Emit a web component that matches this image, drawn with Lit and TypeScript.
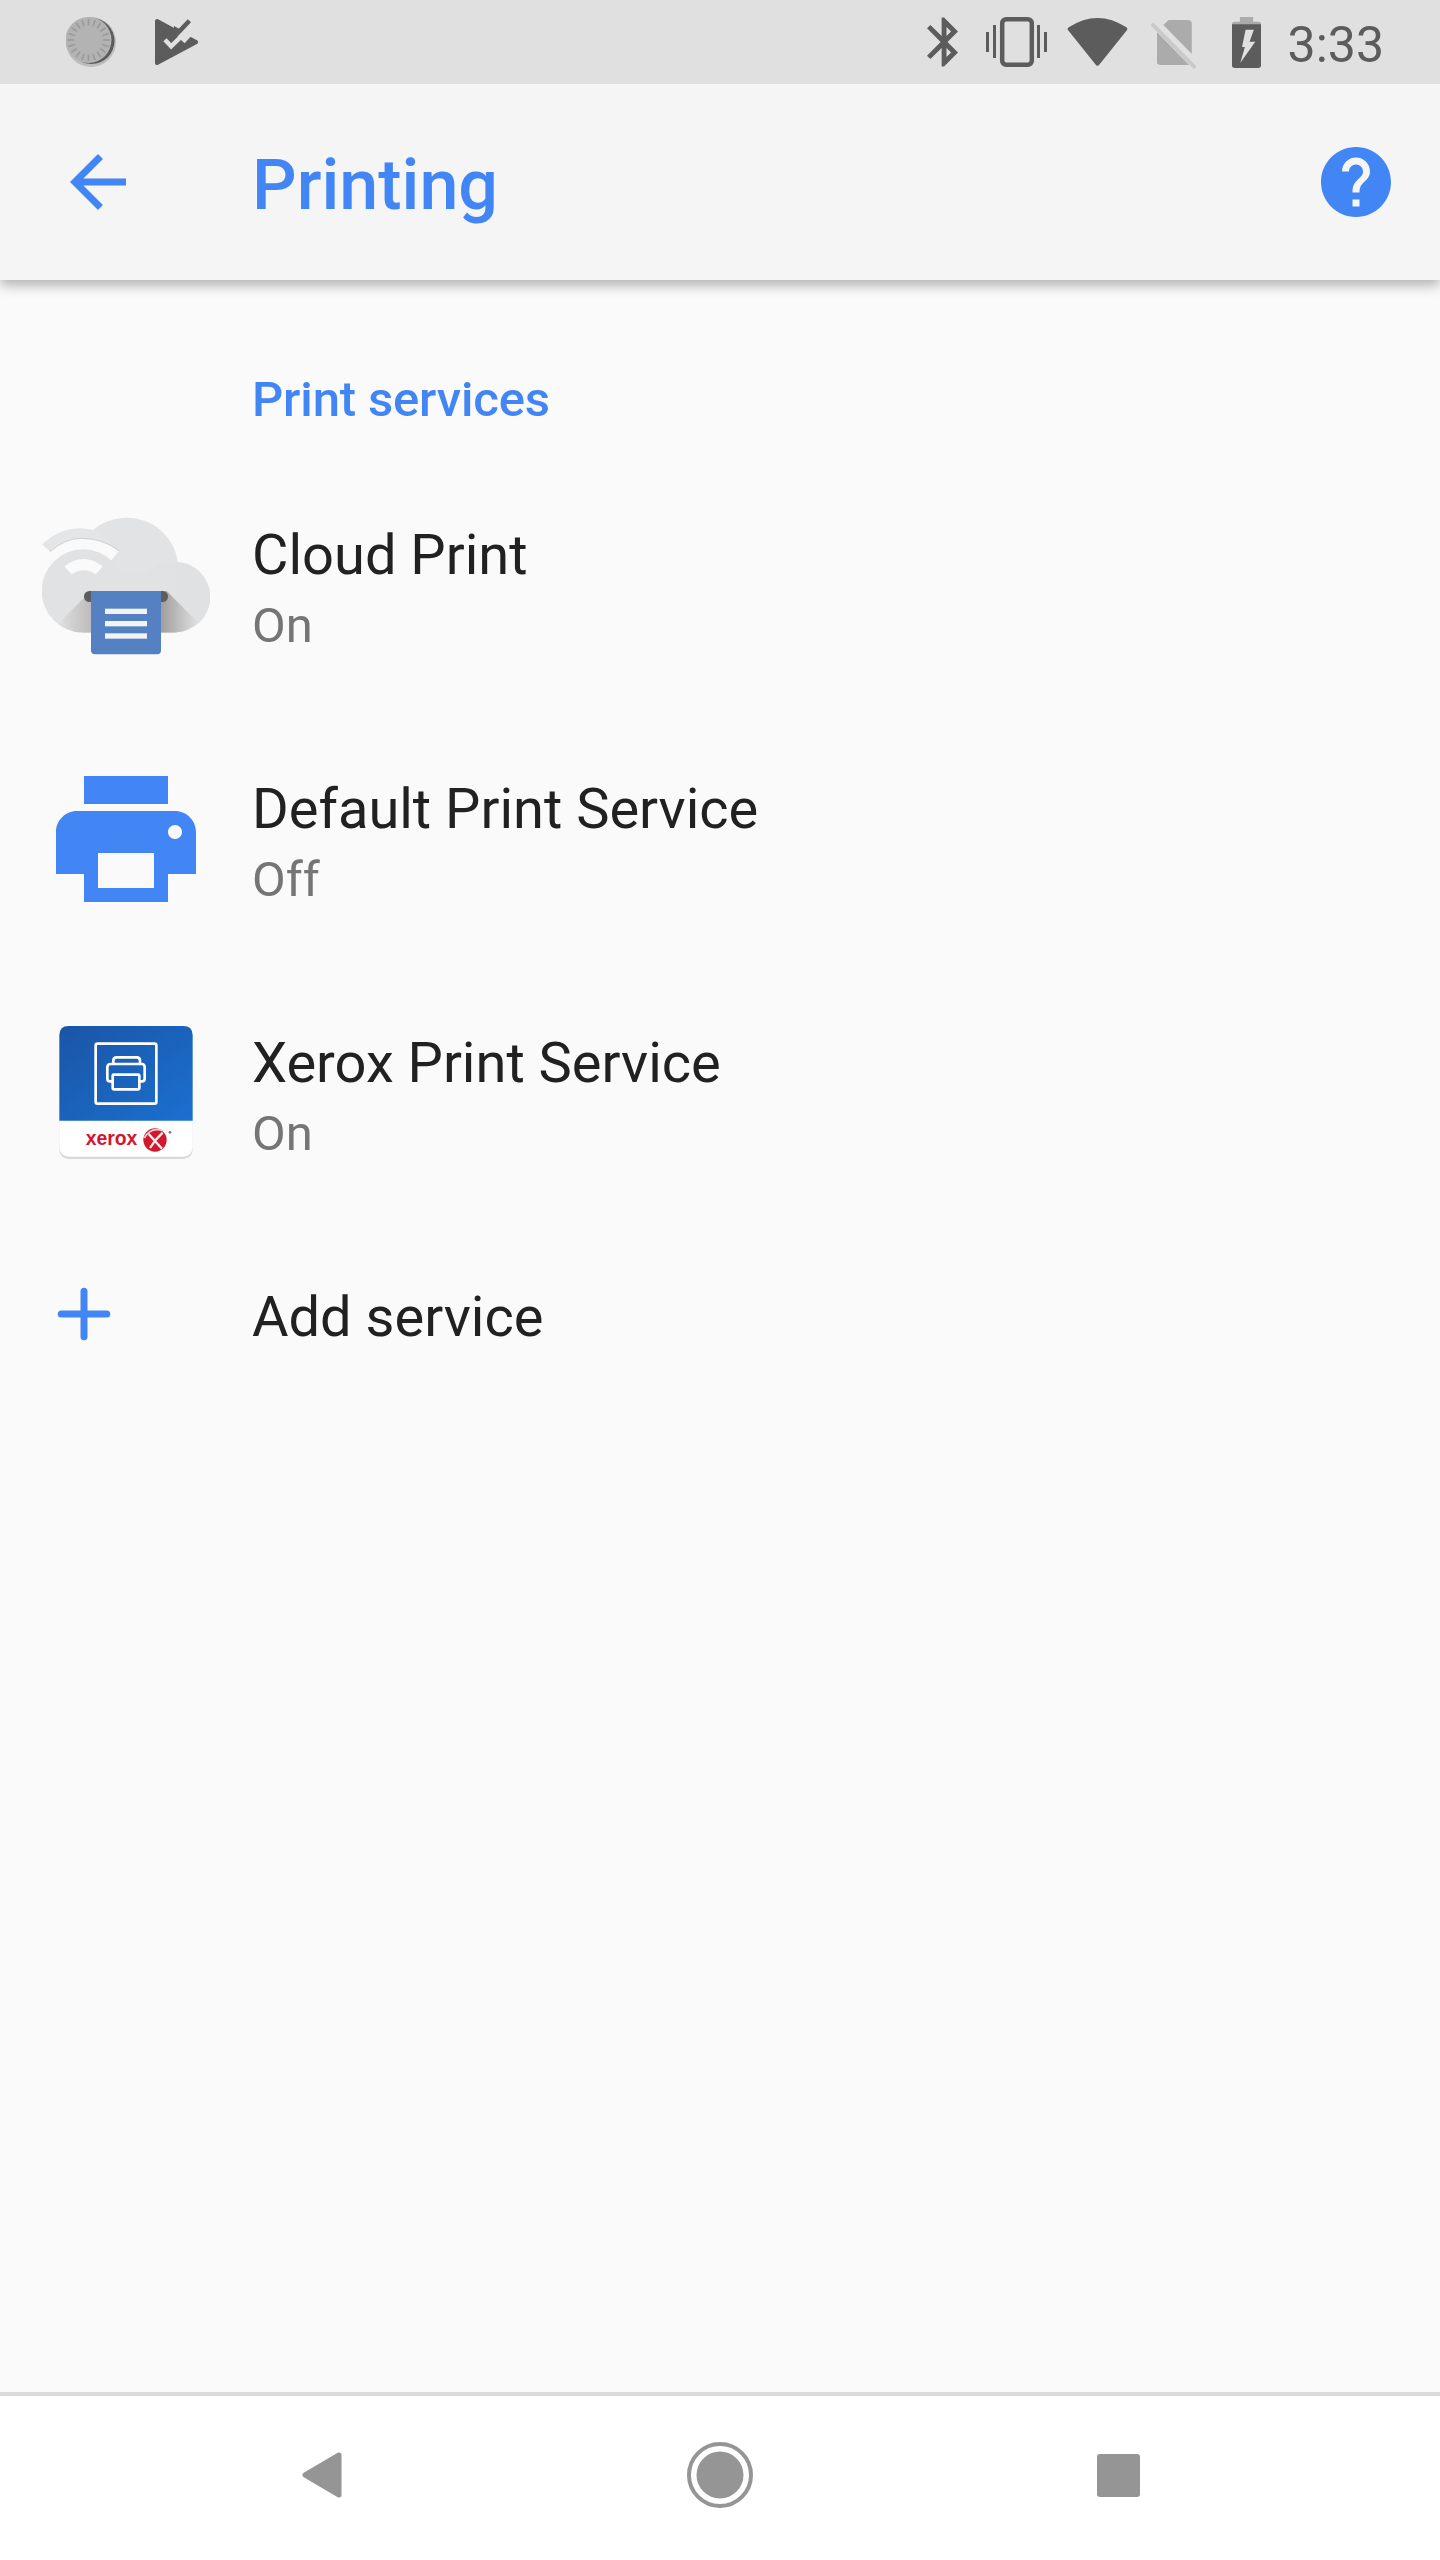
import { LitElement, html, svg, css } from 'lit';
import { customElement } from 'lit/decorators.js';

const ticks = Array.from({ length: 20 }, (_, i) => i * 18);

@customElement('app-root')
export class AppRoot extends LitElement {
  static styles = css`
    :host {
      display: block;
      width: 1440px;
      height: 2560px;
      font-family: Roboto, 'Liberation Sans', sans-serif;
      background: #fafafa;
    }

    .page {
      display: flex;
      flex-direction: column;
      height: 2560px;
    }

    .status {
      display: flex;
      align-items: center;
      height: 84px;
      flex: none;
      background: #e0e0e0;
      padding: 0 56px 0 66px;
      box-sizing: border-box;
      position: relative;
      z-index: 2;
      color: #5c5c5c;
    }

    .status svg {
      display: block;
      flex: none;
    }

    .check { margin-left: 39px; }
    .bt { margin-left: auto; }
    .vib { margin-left: 28px; }
    .wifi { margin-left: 20px; }
    .sim { margin-left: 23px; margin-top: 3px; }
    .batt { margin-left: 36px; }

    .time {
      margin-left: 27px;
      padding-top: 6px;
      font-size: 50px;
      line-height: 78px;
    }

    .toolbar {
      display: flex;
      align-items: center;
      height: 196px;
      flex: none;
      background: #f5f5f5;
      padding: 0 42px 0 56px;
      box-sizing: border-box;
      box-shadow: 0 5px 12px rgba(0, 0, 0, 0.3);
      position: relative;
      z-index: 1;
    }

    .toolbar svg {
      display: block;
      flex: none;
    }

    .title {
      margin-left: 112px;
      padding-top: 5px;
      font-size: 70px;
      font-weight: 500;
      color: #4285f4;
      flex: 1;
    }

    main {
      flex: 1;
    }

    .category {
      height: 178px;
      box-sizing: border-box;
      padding: 78px 0 0 252px;
      font-size: 49px;
      line-height: 84px;
      font-weight: 500;
      letter-spacing: -0.15px;
      color: #4285f4;
    }

    .row {
      display: flex;
      align-items: center;
      height: 254px;
    }

    .row.single {
      height: 188px;
    }

    .lead {
      width: 252px;
      flex: none;
      padding-left: 42px;
      box-sizing: border-box;
    }

    .lead svg {
      display: block;
    }

    .text {
      padding-top: 8px;
    }

    .name {
      font-size: 56px;
      line-height: 72px;
      color: #212121;
    }

    .single .name {
      padding-top: 5px;
    }

    .sum {
      font-size: 49px;
      line-height: 69px;
      color: #757575;
    }

    .nav {
      display: flex;
      justify-content: center;
      align-items: center;
      height: 168px;
      flex: none;
      box-sizing: border-box;
      border-top: 4px solid #dadada;
      background: #fff;
      padding-bottom: 6px;
    }

    .nav div {
      width: 398px;
      display: flex;
      justify-content: center;
    }

    .nav svg {
      display: block;
    }
  `;

  private spinner() {
    return html`<svg width="50" height="50" viewBox="0 0 50 50">
      <circle cx="25" cy="25" r="25" fill="#bdbdbd"></circle>
      <circle cx="25.5" cy="24" r="23" fill="#5c5c5c"></circle>
      <circle cx="22.5" cy="23" r="23" fill="#b3b3b3"></circle>
      ${ticks.map(
        (a) => svg`<rect x="21.7" y="2" width="1.7" height="6.5" fill="#9a9a9a" transform="rotate(${a} 22.5 23)"></rect>`
      )}
    </svg>`;
  }

  private cloudIcon() {
    return html`<svg width="168" height="168" viewBox="66 30 504 504">
      <defs>
        <linearGradient id="sl" x1="0" x2="1" y1="0" y2="0">
          <stop offset="0" stop-color="#bdbbba" stop-opacity="0"></stop>
          <stop offset="1" stop-color="#bdbbba"></stop>
        </linearGradient>
        <linearGradient id="sr" x1="0" x2="1" y1="0" y2="0">
          <stop offset="0" stop-color="#a09e9d"></stop>
          <stop offset="1" stop-color="#a09e9d" stop-opacity="0"></stop>
        </linearGradient>
        <clipPath id="cl">
          <circle cx="190" cy="300" r="125"></circle>
          <circle cx="465" cy="318" r="106"></circle>
          <rect x="190" y="250" width="280" height="175"></rect>
        </clipPath>
      </defs>
      <circle cx="320" cy="235" r="155" fill="#e2e3e4"></circle>
      <circle cx="465" cy="318" r="106" fill="#e0e1e2"></circle>
      <rect x="190" y="250" width="280" height="175" fill="#e1e2e3"></rect>
      <path d="M66 160Q120 112 180 112Q205 112 232 120L297 180Q250 142 185 142Q135 142 90 182Z" fill="#e4e5e6"></path>
      <path d="M90 182Q135 142 185 142Q250 142 297 180L272 210L190 230Z" fill="#fafafa"></path>
      <path d="M90 182Q135 142 185 142Q250 142 297 180" fill="none" stroke="#cfcfcf" stroke-width="3"></path>
      <circle cx="190" cy="300" r="125" fill="#e1e2e3"></circle>
      <path d="M133 226Q190 182 248 226L228 250Q190 226 155 250Z" fill="#fafafa"></path>
      <g clip-path="url(#cl)">
        <path d="M213 300L112 400L150 430H213Z" fill="url(#sl)"></path>
        <path d="M423 300H440L535 395L480 430H423Z" fill="url(#sr)"></path>
      </g>
      <rect x="192" y="300" width="252" height="33" rx="16" fill="#5d5d5d"></rect>
      <path d="M213 300H423V478Q423 490 411 490H225Q213 490 213 478Z" fill="#5580c2"></path>
      <rect x="255" y="353" width="126" height="16" fill="#f1f3f4"></rect>
      <rect x="255" y="390" width="126" height="16" fill="#f1f3f4"></rect>
      <rect x="255" y="427" width="126" height="16" fill="#f1f3f4"></rect>
    </svg>`;
  }

  private printerIcon() {
    return html`<svg width="168" height="168" viewBox="0 0 24 24">
      <path
        fill="#4285f4"
        d="M19 8H5c-1.66 0-3 1.34-3 3v6h4v4h12v-4h4v-6c0-1.66-1.34-3-3-3zm-3 11H8v-5h8v5zm3-7c-.55 0-1-.45-1-1s.45-1 1-1 1 .45 1 1-.45 1-1 1zm-1-9H6v4h12V3z"
      ></path>
    </svg>`;
  }

  private xeroxIcon() {
    return html`<svg width="168" height="168" viewBox="36 -3 504 504">
      <defs>
        <linearGradient id="xb" x1="0" x2="1" y1="0" y2="1">
          <stop offset="0" stop-color="#1a55a6"></stop>
          <stop offset="1" stop-color="#1a70d0"></stop>
        </linearGradient>
      </defs>
      <rect x="88" y="52" width="400" height="395" rx="28" fill="#d9d9d9"></rect>
      <rect x="88" y="48" width="400" height="392" rx="28" fill="#fff"></rect>
      <path d="M88 332V76Q88 48 116 48H460Q488 48 488 76V332Z" fill="url(#xb)"></path>
      <g fill="none" stroke="#fff" stroke-width="8" stroke-linejoin="round">
        <rect x="197" y="101" width="182" height="180" rx="5"></rect>
        <path d="M250 162V152Q250 142 260 142H320Q330 142 330 152V162"></path>
        <path d="M246 214H240Q232 214 232 206V172Q232 162 242 162H336Q344 162 344 172V206Q344 214 336 214H330"></path>
        <rect x="248" y="194" width="80" height="44" rx="3"></rect>
      </g>
      <text x="167" y="405" font-family="Liberation Sans, sans-serif" font-size="62" font-weight="700" fill="#d6142b" textLength="155" lengthAdjust="spacingAndGlyphs">xerox</text>
      <circle cx="375" cy="390" r="35" fill="#d3182e"></circle>
      <path d="M343 384Q362 350 398 362" fill="none" stroke="#e9c9cc" stroke-width="5"></path>
      <path d="M356 372L396 416M398 368Q376 388 360 414" fill="none" stroke="#f2f2f2" stroke-width="7"></path>
      <circle cx="420" cy="367" r="4" fill="#777"></circle>
    </svg>`;
  }

  render() {
    return html`
      <div class="page">
        <div class="status">
          ${this.spinner()}
          <svg class="check" width="43" height="46" viewBox="45 30 125 133" preserveAspectRatio="none">
            <path d="M51 36L164 97L51 157Z" fill="#5c5c5c" stroke="#5c5c5c" stroke-width="12" stroke-linejoin="round"></path>
            <path d="M120 90L170 36" fill="none" stroke="#e0e0e0" stroke-width="30"></path>
            <path d="M100 80L115 58L100 50Z" fill="#5c5c5c"></path>
            <path d="M104 78L145 35" fill="none" stroke="#5c5c5c" stroke-width="13"></path>
            <path d="M74 90L92 109L134 68" fill="none" stroke="#e0e0e0" stroke-width="13"></path>
          </svg>
          <svg class="bt" width="31" height="50" viewBox="5 2 12.71 20">
            <path
              fill="#5c5c5c"
              d="M17.71 7.71L12 2h-1v7.59L6.41 5 5 6.41 10.59 12 5 17.59 6.41 19 11 14.41V22h1l5.71-5.71-4.3-4.29 4.3-4.29zM13 5.83l1.88 1.88L13 9.59V5.83zm1.88 10.46L13 18.17v-3.76l1.88 1.88z"
            ></path>
          </svg>
          <svg class="vib" width="61" height="52" viewBox="0 0 61 52" fill="#5c5c5c">
            <rect x="0" y="16" width="3" height="20"></rect>
            <rect x="7" y="9" width="3" height="33"></rect>
            <rect x="51" y="9" width="3" height="33"></rect>
            <rect x="58" y="16" width="3" height="20"></rect>
            <rect x="16.2" y="3.2" width="29.6" height="45.6" rx="4" fill="none" stroke="#5c5c5c" stroke-width="4.5"></rect>
          </svg>
          <svg class="wifi" width="61" height="50" viewBox="525 50 170 150" preserveAspectRatio="none">
            <path d="M533 86Q610 32 687 86L610 190Z" fill="#5c5c5c" stroke="#5c5c5c" stroke-width="12" stroke-linejoin="round"></path>
          </svg>
          <svg class="sim" width="45" height="50" viewBox="758 55 127 150" preserveAspectRatio="none">
            <path d="M775 185V90L808 58H862Q873 58 873 69V185Q873 193 862 193H785Q775 193 775 185Z" fill="#ababab"></path>
            <path d="M762 60L882 190" fill="none" stroke="#e0e0e0" stroke-width="28"></path>
            <path d="M764 73L880 198" fill="none" stroke="#c9c9c9" stroke-width="11" stroke-linecap="round"></path>
          </svg>
          <svg class="batt" width="29" height="51" viewBox="983 48 81 153" preserveAspectRatio="none">
            <path d="M1005 48H1042V62H1058Q1064 62 1064 68V76H983V68Q983 62 989 62H1005Z" fill="#ababab"></path>
            <path d="M983 70H1064V193Q1064 201 1056 201H991Q983 201 983 193Z" fill="#5c5c5c"></path>
            <path d="M1021 86H1044L1032 122H1048L1006 186L1019 138H1011Z" fill="#e0e0e0"></path>
          </svg>
          <span class="time">3:33</span>
        </div>

        <div class="toolbar">
          <svg width="84" height="84" viewBox="0 0 24 24">
            <path fill="#4285f4" d="M20 11H7.83l5.59-5.59L12 4l-8 8 8 8 1.41-1.41L7.83 13H20v-2z"></path>
          </svg>
          <span class="title">Printing</span>
          <svg width="84" height="84" viewBox="0 0 24 24">
            <path
              fill="#4285f4"
              d="M12 2C6.48 2 2 6.48 2 12s4.48 10 10 10 10-4.48 10-10S17.52 2 12 2zm1 17h-2v-2h2v2zm2.07-7.75l-.9.92C13.45 12.9 13 13.5 13 15h-2v-.5c0-1.1.45-2.1 1.17-2.83l1.24-1.26c.37-.36.59-.86.59-1.41 0-1.1-.9-2-2-2s-2 .9-2 2H8c0-2.21 1.79-4 4-4s4 1.79 4 4c0 .88-.36 1.68-.93 2.25z"
            ></path>
          </svg>
        </div>

        <main>
          <div class="category">Print services</div>
          <div class="row">
            <div class="lead">${this.cloudIcon()}</div>
            <div class="text"><div class="name">Cloud Print</div><div class="sum">On</div></div>
          </div>
          <div class="row">
            <div class="lead">${this.printerIcon()}</div>
            <div class="text"><div class="name">Default Print Service</div><div class="sum">Off</div></div>
          </div>
          <div class="row">
            <div class="lead">${this.xeroxIcon()}</div>
            <div class="text"><div class="name">Xerox Print Service</div><div class="sum">On</div></div>
          </div>
          <div class="row single">
            <div class="lead">
              <svg width="84" height="84" viewBox="0 0 24 24">
                <path d="M12 5.5V18.5M5.5 12H18.5" fill="none" stroke="#4285f4" stroke-width="2" stroke-linecap="round"></path>
              </svg>
            </div>
            <div class="name">Add service</div>
          </div>
        </main>

        <div class="nav">
          <div>
            <svg width="40" height="46" viewBox="0 0 40 46">
              <path d="M37 3V43L3 23Z" fill="#959595" stroke="#959595" stroke-width="5" stroke-linejoin="round"></path>
            </svg>
          </div>
          <div>
            <svg width="66" height="66" viewBox="0 0 66 66">
              <circle cx="33" cy="33" r="31" fill="none" stroke="#959595" stroke-width="4"></circle>
              <circle cx="33" cy="33" r="23.5" fill="#959595"></circle>
            </svg>
          </div>
          <div>
            <svg width="43" height="43" viewBox="0 0 43 43">
              <rect width="43" height="43" rx="3" fill="#959595"></rect>
            </svg>
          </div>
        </div>
      </div>
    `;
  }
}
